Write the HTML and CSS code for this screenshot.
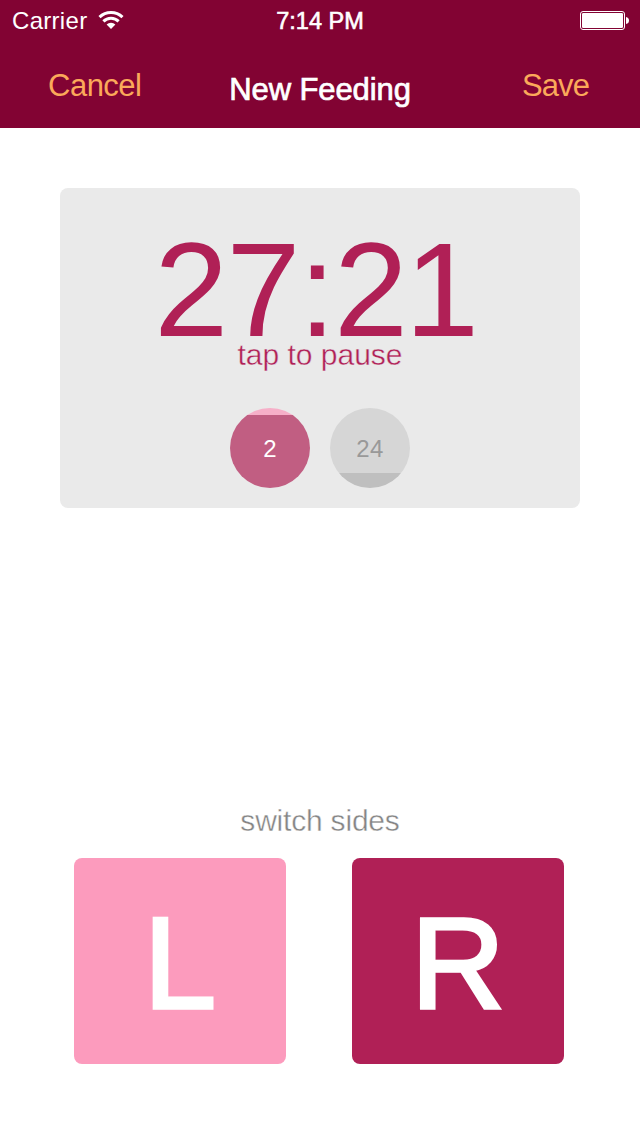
FILE: index.html
```html
<!DOCTYPE html>
<html lang="en">
<head>
<meta charset="utf-8">
<title>New Feeding</title>
<link rel="stylesheet" href="styles.css">
</head>
<body>
<header class="header">
  <div class="status">
    <div class="carrier">
      <span class="carrier-name">Carrier</span>
      <svg class="wifi" width="26" height="20" viewBox="0 0 26 20">
        <g fill="none" stroke="#fff" stroke-width="3">
          <path d="M1.5 7.1A16.5 16.5 0 0 1 24.5 7.1"/>
          <path d="M5.4 11.4A10.8 10.8 0 0 1 20.6 11.4"/>
        </g>
        <path d="M8.6 14.4A6.4 6.4 0 0 1 17.4 14.4L13 19Z" fill="#fff"/>
      </svg>
    </div>
    <span class="clock">7:14 PM</span>
    <svg class="battery" width="50" height="20" viewBox="0 0 50 20">
      <rect x=".5" y=".5" width="44" height="18" rx="2.5" fill="none" stroke="#fff"/>
      <rect x="2" y="2" width="41" height="15" rx="1.2" fill="#fff"/>
      <path d="M46 6Q49 6.5 49 9.5T46 13Z" fill="#fff"/>
    </svg>
  </div>
  <nav class="nav">
    <span class="nav-action cancel">Cancel</span>
    <h1 class="title">New Feeding</h1>
    <span class="nav-action save">Save</span>
  </nav>
</header>
<main class="content">
  <section class="timer-card">
    <div class="time">27:<span class="seconds">21</span></div>
    <div class="hint">tap to pause</div>
    <div class="sides">
      <div class="dot dot-left"><span>2</span></div>
      <div class="dot dot-right"><span>24</span></div>
    </div>
  </section>
  <section class="switcher">
    <div class="switch-label">switch sides</div>
    <div class="buttons">
      <div class="side side-left">L</div>
      <div class="side side-right">R</div>
    </div>
  </section>
</main>
</body>
</html>
```
FILE: styles.css
```css
* { box-sizing: border-box; }
body {
  margin: 0;
  width: 640px;
  height: 1136px;
  display: flex;
  flex-direction: column;
  background: #fff;
  font-family: "Liberation Sans", Arial, sans-serif;
  overflow: hidden;
}
.header { height: 128px; background: #820333; color: #fff; }
.status {
  height: 40px;
  display: grid;
  grid-template-columns: 1fr auto 1fr;
  font-size: 24px;
  line-height: 41px;
}
.carrier { display: flex; padding-left: 12px; gap: 10.5px; }
.carrier-name { letter-spacing: .3px; }
.wifi { margin-top: 10px; }
.clock { padding-top: 1px; font-size: 23.5px; -webkit-text-stroke: .6px #fff; }
.battery { justify-self: end; margin: 11px 10px 0 0; }
.nav {
  height: 88px;
  display: grid;
  grid-template-columns: 1fr auto 1fr;
  padding: 0 51px 0 48px;
  line-height: 40px;
}
.nav-action { margin-top: 26px; font-size: 31px; color: #fba95a; }
.cancel { letter-spacing: -.5px; }
.save { justify-self: end; letter-spacing: -.9px; }
.title {
  margin: 30px 0 0 3px;
  font-size: 31px;
  font-weight: 400;
  letter-spacing: -.1px;
  -webkit-text-stroke: .7px #fff;
}
.content { flex: 1; display: flex; flex-direction: column; justify-content: space-between; padding: 60px 60px 72px; }
.timer-card {
  height: 320px;
  padding-top: 52px;
  border-radius: 8px;
  background: #eaeaea;
  color: #b02056;
  text-align: center;
}
.time { padding-right: 10px; font-size: 133px; line-height: 100px; letter-spacing: -1.7px; }
.seconds { letter-spacing: -3px; }
.hint {
  font-size: 30px;
  line-height: 30px;
  -webkit-text-stroke: .4px #eaeaea;
}
.sides { display: flex; justify-content: center; gap: 20px; margin-top: 38px; }
.dot {
  width: 80px;
  height: 80px;
  border-radius: 50%;
  font-size: 24px;
  line-height: 81px;
  letter-spacing: .4px;
}
.dot-left { background: linear-gradient(#f6afc8 7px, #c15e82 7px); color: #fff; }
.dot-right { background: linear-gradient(#d6d6d6 65px, #bfbfbf 65px); color: #999; }
.switch-label {
  margin-bottom: 17px;
  font-size: 30px;
  line-height: 40px;
  letter-spacing: -.2px;
  text-align: center;
  color: #858585;
  -webkit-text-stroke: .4px #fff;
}
.buttons { display: flex; gap: 66px; padding-left: 14px; }
.side {
  width: 212px;
  height: 206px;
  border-radius: 8px;
  color: #fff;
  font-size: 130px;
  line-height: 210px;
  text-align: center;
  -webkit-text-stroke: 3.4px #fff;
}
.side-left { background: #fc9bbd; }
.side-right { background: #b02056; }
```
